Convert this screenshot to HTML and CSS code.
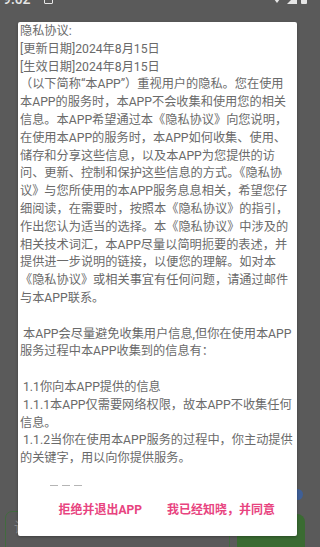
FILE: index.html
```html
<!DOCTYPE html>
<html lang="zh-CN">
<head>
<meta charset="utf-8">
<title>隐私协议</title>
<link rel="stylesheet" href="styles.css">
</head>
<body>
<div class="screen">
  <div class="app">
    <div class="status">
      <span class="time">9:02</span>
      <span class="notif"></span>
      <span class="status-right">
        <svg class="wifi" viewBox="0 0 12 10" width="12" height="10"><path d="M0 1 Q6 -2 12 1 L6 9 Z" fill="#e6e6e6"/></svg>
        <svg class="signal" viewBox="0 0 10 10" width="10" height="10"><path d="M10 0 L10 10 L0 10 Z" fill="#e6e6e6"/></svg>
        <svg class="battery" viewBox="0 0 6 10" width="6" height="10"><rect x="0" y="0" width="6" height="10" rx="1" fill="#e6e6e6"/></svg>
      </span>
    </div>
    <div class="spacer"></div>
    <div class="bottom">
      <div class="dot-row"><span class="dot"></span></div>
      <div class="input-row">
        <div class="input">请输入关键字</div>
        <div class="send"></div>
      </div>
    </div>
  </div>

  <div class="dialog">
    <div class="content">
      <div class="line">隐私协议:</div>
      <div class="line">[更新日期]2024年8月15日</div>
      <div class="line">[生效日期]2024年8月15日</div>
      <div class="line">（以下简称“本APP”）重视用户的隐私。您在使用</div>
      <div class="line">本APP的服务时，本APP不会收集和使用您的相关</div>
      <div class="line">信息。本APP希望通过本《隐私协议》向您说明，</div>
      <div class="line">在使用本APP的服务时，本APP如何收集、使用、</div>
      <div class="line">储存和分享这些信息，以及本APP为您提供的访</div>
      <div class="line">问、更新、控制和保护这些信息的方式。《隐私协</div>
      <div class="line">议》与您所使用的本APP服务息息相关，希望您仔</div>
      <div class="line">细阅读，在需要时，按照本《隐私协议》的指引，</div>
      <div class="line">作出您认为适当的选择。本《隐私协议》中涉及的</div>
      <div class="line">相关技术词汇，本APP尽量以简明扼要的表述，并</div>
      <div class="line">提供进一步说明的链接，以便您的理解。如对本</div>
      <div class="line">《隐私协议》或相关事宜有任何问题，请通过邮件</div>
      <div class="line">与本APP联系。</div>
      <div class="line blank"></div>
      <div class="line">&nbsp;本APP会尽量避免收集用户信息,但你在使用本APP</div>
      <div class="line">服务过程中本APP收集到的信息有：</div>
      <div class="line blank"></div>
      <div class="line">&nbsp;1.1你向本APP提供的信息</div>
      <div class="line">&nbsp;1.1.1本APP仅需要网络权限，故本APP不收集任何</div>
      <div class="line">信息。</div>
      <div class="line">&nbsp;1.1.2当你在使用本APP服务的过程中，你主动提供</div>
      <div class="line">的关键字，用以向你提供服务。</div>
    </div>
    <div class="dashes"><span></span><span></span><span></span></div>
    <div class="actions">
      <span class="btn">拒绝并退出APP</span>
      <span class="btn">我已经知晓，并同意</span>
    </div>
  </div>
</div>
</body>
</html>
```

FILE: styles.css
```css
html, body {
  margin: 0;
  padding: 0;
  background: #5a5a5a;
}

.screen {
  position: relative;
  width: 313px;
  height: 547px;
  overflow: hidden;
  background: #5a5a5a;
  font-family: Roboto, "Noto Sans CJK SC", sans-serif;
}

.app {
  display: flex;
  flex-direction: column;
  height: 547px;
}

.status {
  display: flex;
  align-items: center;
  height: 14px;
  margin-top: -8px;
  padding: 0 6px 0 3px;
  color: #e6e6e6;
  font-size: 14px;
  line-height: 14px;
}

.time {
  font-weight: 500;
}

.notif {
  width: 9px;
  height: 9px;
  margin-left: 13px;
  border: 1.5px solid #e6e6e6;
  box-sizing: border-box;
  border-radius: 1px;
}

.status-right {
  margin-left: auto;
  display: flex;
  align-items: flex-start;
  gap: 4px;
}

.spacer {
  flex: 1;
}

.bottom {
  display: flex;
  flex-direction: column;
  margin-bottom: -12px;
}

.dot-row {
  display: flex;
  justify-content: flex-end;
  padding-right: 10px;
  margin-bottom: 11px;
}

.dot {
  width: 11px;
  height: 11px;
  border-radius: 50%;
  background: #3f5f96;
}

.input-row {
  display: flex;
  align-items: flex-end;
  gap: 7px;
  padding: 0 8px 0 5px;
}

.input {
  flex: 0 0 225px;
  height: 48px;
  box-sizing: border-box;
  border: 1.5px solid #426b3f;
  border-radius: 7px;
  padding: 5px 8px;
  color: #8a8a8a;
  font-size: 14px;
  line-height: 20px;
}

.send {
  flex: 1;
  height: 45px;
  border-radius: 8px;
  background: #3a6b32;
}

.dialog {
  position: absolute;
  left: 18px;
  top: 22px;
  width: 279px;
  height: 514px;
  background: #ffffff;
  border-radius: 2px;
  box-shadow: 0 1px 3px rgba(0, 0, 0, 0.3);
  display: flex;
  flex-direction: column;
  box-sizing: border-box;
  padding-top: 1px;
}

.content {
  padding-left: 2px;
  color: #6a6a6a;
  font-size: 12.2px;
  line-height: 17.8px;
}

.line {
  white-space: nowrap;
  height: 17.8px;
}

.dashes {
  display: flex;
  gap: 4px;
  margin: 17px 0 0 32px;
}

.dashes span {
  width: 8px;
  height: 1.5px;
  background: #b5b5b5;
}

.actions {
  display: flex;
  justify-content: flex-end;
  gap: 25px;
  padding-right: 22px;
  margin-top: 16px;
}

.btn {
  color: #e8447f;
  font-size: 12px;
  line-height: 16px;
  font-weight: 700;
}
```
